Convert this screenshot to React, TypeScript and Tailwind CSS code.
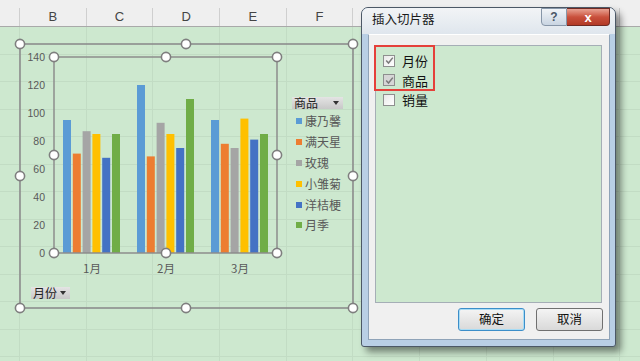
import React from "react";

const CJK = { fontFamily: '"Noto Sans CJK SC", "Liberation Sans", sans-serif' };

const SERIES = [
  { name: "康乃馨", color: "#5b9bd5" },
  { name: "满天星", color: "#ed7d31" },
  { name: "玫瑰", color: "#a5a5a5" },
  { name: "小雏菊", color: "#ffc000" },
  { name: "洋桔梗", color: "#4472c4" },
  { name: "月季", color: "#70ad47" },
];

const MONTHS = [
  { label: "1月", values: [95, 71, 87, 85, 68, 85] },
  { label: "2月", values: [120, 69, 93, 85, 75, 110] },
  { label: "3月", values: [95, 78, 75, 96, 81, 85] },
];

// letters behind the dialog are not visible
const COLS = ["B", "C", "D", "E", "F", "", "", "", ""];

// selection handles, page coordinates
const HANDLES = [
  [20, 44], [186, 44], [353, 44], [20, 176], [353, 176], [20, 308], [186, 308], [353, 308],
  [54, 57], [166, 57], [277, 57], [54, 155], [277, 155], [54, 253], [166, 253], [277, 253],
];

function Sheet() {
  return (
    <div className="flex flex-col w-[640px] h-[361px] bg-[#cde8cf] overflow-hidden">
      <div className="h-[27px] bg-[#efefef] border-b border-[#a9a9a9] pt-[8px] flex shrink-0">
        <div className="w-[20px] h-[18px] border-r border-[#cfcfcf] shrink-0" />
        {COLS.map((c, i) => (
          <div
            key={i}
            className="w-[66.7px] h-[18px] border-r border-[#cfcfcf] shrink-0 flex items-center justify-center text-[13px] text-[#444]"
            style={{ fontFamily: '"Liberation Sans", sans-serif' }}
          >
            {c}
          </div>
        ))}
      </div>
      {Array.from({ length: 13 }).map((_, r) => (
        <div key={r} className="flex h-[27.5px] shrink-0 border-b border-[#c2dcc4]">
          <div className="w-[20px] border-r border-[#c2dcc4] shrink-0" />
          {COLS.map((c, i) => (
            <div key={i} className="w-[66.7px] border-r border-[#c2dcc4] shrink-0" />
          ))}
        </div>
      ))}
    </div>
  );
}

function Plot() {
  const base = 208;
  const k = 1.4;
  return (
    <svg width="260" height="236" className="shrink-0">
      {[0, 20, 40, 60, 80, 100, 120, 140].map((v) => (
        <text
          key={v}
          x="24"
          y={base - v * k + 3.8}
          textAnchor="end"
          fontSize="10.5"
          fill="#595959"
          fontFamily="Liberation Sans, sans-serif"
        >
          {v}
        </text>
      ))}
      {MONTHS.map((m, g) => {
        const start = 42 + g * 74;
        return (
          <g key={m.label}>
            {m.values.map((v, i) => (
              <rect
                key={i}
                x={start + i * 9.8}
                y={base - v * k}
                width="8"
                height={v * k}
                fill={SERIES[i].color}
              />
            ))}
            <text x={start + 29} y="228" textAnchor="middle" fontSize="11.5" fill="#595959" style={CJK}>
              {m.label}
            </text>
          </g>
        );
      })}
      <rect x="33" y="12" width="223" height="196" fill="none" stroke="#8d8d8d" strokeWidth="1.5" />
    </svg>
  );
}

function FilterButton({ label, width }: { label: string; width: string }) {
  return (
    <div
      className={`${width} h-[12px] flex items-center justify-between pl-[2px] pr-[4px] bg-gradient-to-b from-[#e4e4e4] to-[#c8c8c8] text-[12px] leading-none text-[#222]`}
      style={CJK}
    >
      <span>{label}</span>
      <svg width="6" height="4" viewBox="0 0 6 4">
        <path d="M0 0 H6 L3 4 Z" fill="#333" />
      </svg>
    </div>
  );
}

function Chart() {
  return (
    <div className="absolute left-[21px] top-[45px] w-[331px] h-[262px] flex flex-col">
      <div className="flex">
        <Plot />
        <div className="ml-[11px] pt-[52px] flex flex-col">
          <FilterButton label="商品" width="w-[51px]" />
          <div className="mt-[2px] flex flex-col">
            {SERIES.map((s) => (
              <div key={s.name} className="h-[20.8px] flex items-center pl-[4px] gap-[3px]">
                <span className="w-[6px] h-[6px]" style={{ backgroundColor: s.color }} />
                <span className="text-[12px] text-[#595959] leading-none" style={CJK}>
                  {s.name}
                </span>
              </div>
            ))}
          </div>
        </div>
      </div>
      <div className="ml-[10px] mt-[6px]">
        <FilterButton label="月份" width="w-[39px]" />
      </div>
    </div>
  );
}

function Selection() {
  return (
    <svg width="640" height="361" className="absolute left-0 top-0 pointer-events-none">
      <rect x="20" y="44" width="333" height="264" fill="none" stroke="#8d8d8d" strokeWidth="1.6" />
      {HANDLES.map(([x, y], i) => (
        <circle key={i} cx={x} cy={y} r="4.6" fill="#fff" stroke="#7f7f7f" strokeWidth="1.6" />
      ))}
    </svg>
  );
}

function CheckBox({ state }: { state: "on" | "grey" | "off" }) {
  return (
    <span
      className={`w-[12px] h-[12px] border border-[#8e8f8f] flex items-center justify-center shrink-0 ${
        state === "grey" ? "bg-[#d6d6d6]" : "bg-gradient-to-br from-[#e9e9e9] to-white"
      }`}
    >
      {state !== "off" && (
        <svg width="9" height="9" viewBox="0 0 9 9">
          <path d="M1.2 4.6 L3.5 7 L7.8 1.6" fill="none" stroke="#7a7a7a" strokeWidth="1.5" />
        </svg>
      )}
    </span>
  );
}

function Dialog() {
  const fields: { name: string; state: "on" | "grey" | "off" }[] = [
    { name: "月份", state: "on" },
    { name: "商品", state: "grey" },
    { name: "销量", state: "off" },
  ];
  return (
    <div
      className="absolute left-[361px] top-[7px] w-[255px] h-[340px] flex flex-col border border-[#4c5866] rounded-t-[7px] rounded-b-[3px] bg-[#b9cfe5] shadow-[5px_5px_7px_rgba(0,0,0,0.45)]"
      style={CJK}
    >
      <div className="h-[26px] flex justify-between rounded-t-[6px] bg-gradient-to-b from-[#f2f4f6] to-[#dfe6ed] shrink-0">
        <span className="pl-[10px] pt-[5px] text-[12.5px] text-[#1b1b1b] leading-none">插入切片器</span>
        <div className="flex mr-[5px] h-[18px]">
          <div
            className="w-[26px] flex items-center justify-center border border-[#8796a8] rounded-bl-[4px] bg-gradient-to-b from-[#f1f4f7] to-[#c9d5e2] text-[12px] font-bold text-[#4a5666]"
            style={{ fontFamily: '"Liberation Sans", sans-serif' }}
          >
            ?
          </div>
          <div
            className="w-[43px] flex items-center justify-center border border-l-0 border-[#6f2a23] rounded-br-[4px] bg-gradient-to-b from-[#e8a293] via-[#c9503c] to-[#b23a26] text-white text-[13px] font-bold leading-none"
            style={{ fontFamily: '"Liberation Sans", sans-serif' }}
          >
            x
          </div>
        </div>
      </div>
      <div className="flex-1 ml-[6px] mr-[5px] mb-[6px] border border-[#8fa3b8] bg-[#f0f0f0] border-t-white flex flex-col pl-[6px] pr-[5px] pt-[10px]">
        <div className="relative w-[227px] h-[258px] border border-[#a5aeb6] bg-[#cde8cf] pt-[5px] pl-[7px] flex flex-col">
          {fields.map((f) => (
            <div key={f.name} className="h-[19.5px] flex items-center gap-[7px]">
              <CheckBox state={f.state} />
              <span className="text-[13px] text-[#111] leading-none">{f.name}</span>
            </div>
          ))}
          <div className="absolute left-[-2px] top-[-1px] w-[61px] h-[46px] border-2 border-[#e5403a]" />
        </div>
        <div className="flex justify-end gap-[11px] mt-[5px] pr-[1px]">
          <button className="w-[67px] h-[23px] rounded-[3px] border border-[#3c8ec9] shadow-[inset_0_0_0_1px_#a8dcf5] bg-gradient-to-b from-[#f4f4f4] to-[#d9d9d9] text-[12.5px] text-[#111]">
            确定
          </button>
          <button className="w-[67px] h-[23px] rounded-[3px] border border-[#707070] bg-gradient-to-b from-[#f4f4f4] to-[#d9d9d9] text-[12.5px] text-[#111]">
            取消
          </button>
        </div>
      </div>
    </div>
  );
}

export default function App() {
  return (
    <div className="relative w-[640px] h-[361px] overflow-hidden">
      <Sheet />
      <Chart />
      <Selection />
      <Dialog />
    </div>
  );
}
